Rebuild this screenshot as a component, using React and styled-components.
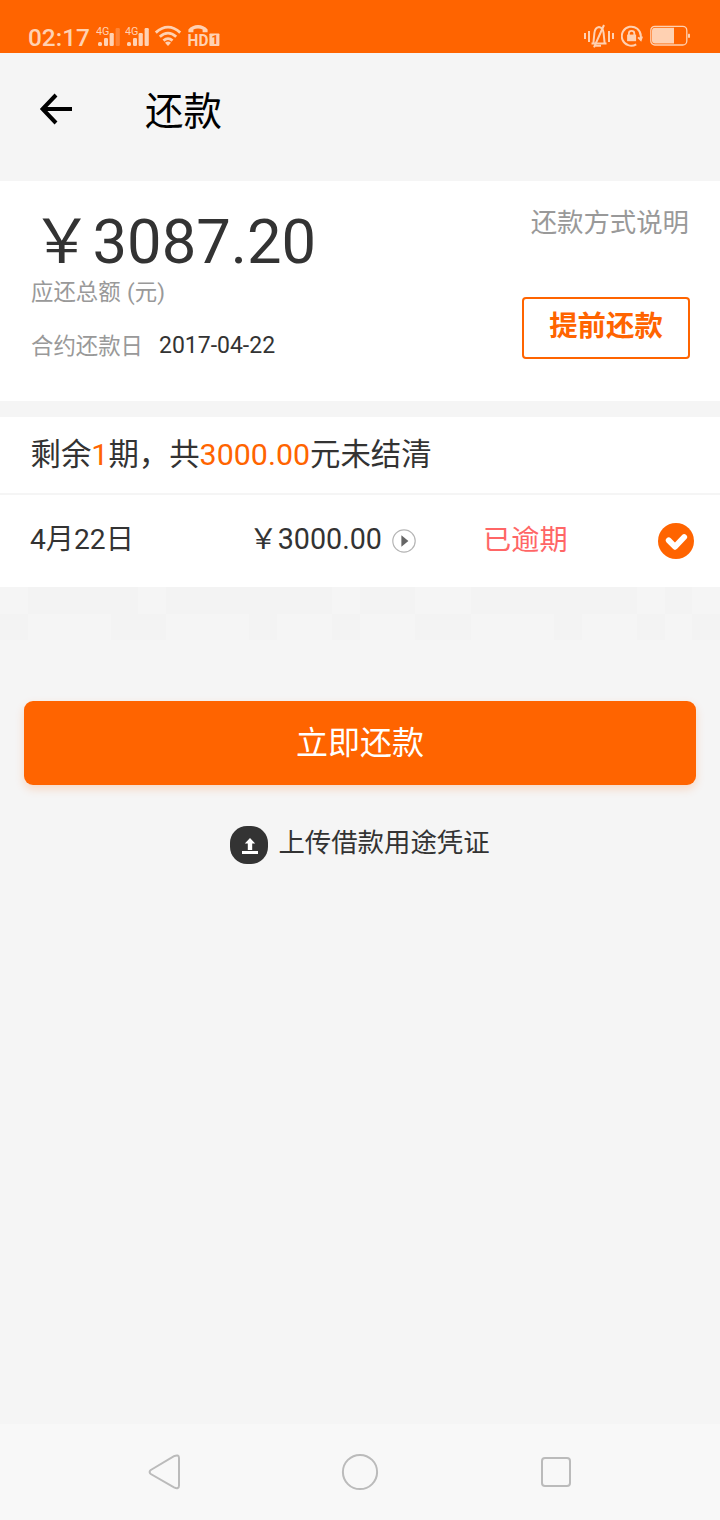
import styled, { createGlobalStyle } from "styled-components";

const ORANGE = "#ff6400";
const TINT = "#ffd1b2";
const PAGE = "#f5f5f5";

const GlobalStyle = createGlobalStyle`
  * {
    box-sizing: border-box;
  }

  body {
    margin: 0;
    background: ${PAGE};
    color: #333;
    font-family: Roboto, "Noto Sans CJK SC", sans-serif;
    white-space: nowrap;
  }

  svg {
    display: block;
    flex: none;
  }

  button {
    font-family: inherit;
    cursor: pointer;
  }
`;

const Screen = styled.div`
  width: 720px;
  height: 1520px;
  display: flex;
  flex-direction: column;
`;

const StatusBar = styled.div`
  height: 53px;
  padding: 20px 29px 0 28px;
  display: flex;
  justify-content: space-between;
  background: ${ORANGE};
  color: ${TINT};
`;

const StatusGroup = styled.div`
  display: flex;
  align-items: center;
  height: 32px;
  gap: ${(props) => props.$gap}px;
`;

const Clock = styled.span`
  width: 63px;
  font-size: 24.4px;
  font-weight: 500;
  line-height: 33px;
  padding-top: 3px;
`;

const Header = styled.header`
  height: 128px;
  padding: 0 38px 16px;
  display: flex;
  align-items: center;
`;

const Title = styled.h1`
  margin: 6px 0 0 71px;
  font-size: 38.4px;
  font-weight: 400;
  line-height: 48px;
  color: #000;
`;

const Summary = styled.section`
  height: 220px;
  padding: 25px 31px 0 31px;
  display: flex;
  justify-content: space-between;
  background: #fff;
`;

const SummaryRight = styled.div`
  display: flex;
  flex-direction: column;
  align-items: flex-end;
`;

const Total = styled.div`
  font-size: 61.5px;
  line-height: 72px;
`;

const Label = styled.div`
  font-size: 22.4px;
  line-height: 28px;
  color: #999;
  word-spacing: 1px;
`;

const DueDate = styled.div`
  margin-top: 25px;
  display: flex;
  align-items: center;
  gap: 16px;
  font-size: 23px;
  line-height: 30px;
`;

const HelpLink = styled.a`
  font-size: 26.4px;
  line-height: 34px;
  color: #999;
`;

const EarlyButton = styled.button`
  width: 168px;
  height: 62px;
  margin: 57px -1px 0 0;
  padding: 0 0 9px;
  border: 2px solid ${ORANGE};
  border-radius: 4px;
  background: #fff;
  color: ${ORANGE};
  font-size: 28.4px;
  font-weight: 700;
`;

const Plan = styled.section`
  margin-top: 16px;
  background: #fff;
`;

const PlanTitle = styled.div`
  height: 78px;
  padding: 0 30.5px;
  border-bottom: 2px solid ${PAGE};
  font-size: 30.4px;
  line-height: 76px;

  em {
    color: ${ORANGE};
    font-style: normal;
  }
`;

const PlanRow = styled.div`
  height: 92px;
  padding: 0 26px 0 30px;
  display: grid;
  grid-template-columns: 219px 234px 1fr 36px;
  align-items: center;
  font-size: 28.2px;
`;

const Cell = styled.span`
  display: flex;
  align-items: center;
  gap: 10px;
  line-height: 36px;
  color: ${(props) => (props.$overdue ? "#ff6666" : "inherit")};
`;

const CellText = styled.span`
  padding-bottom: ${(props) => props.$lift ?? 3}px;
  font-size: ${(props) => props.$size ?? 28.2}px;
`;

const Mosaic = styled.div`
  height: 53px;
  display: grid;
  grid-template-columns: repeat(26, 1fr);
  grid-template-rows: 27px 26px;
`;

const Tile = styled.i`
  background: ${(props) => (props.$dark ? "#f3f3f3" : PAGE)};
`;

const PayButton = styled.button`
  height: 84px;
  margin: 61px 24px 0;
  padding: 0 0 7px;
  border: 0;
  border-radius: 9px;
  background: ${ORANGE};
  box-shadow: 0 4px 10px rgba(255, 100, 0, 0.2);
  color: #fff;
  font-size: 32px;
`;

const Upload = styled.a`
  margin-top: 41px;
  height: 38px;
  display: flex;
  justify-content: center;
  align-items: center;
  gap: 10px;
  font-size: 26.4px;

  span {
    line-height: 34px;
    padding-bottom: 4px;
  }
`;

const NavBar = styled.nav`
  height: 96px;
  margin-top: auto;
  padding: 0 146px;
  display: flex;
  justify-content: space-between;
  align-items: center;
  background: #f8f8f8;
`;

const Signal = ({ weak }) => (
  <svg width="24" height="24" viewBox="0 0 24 24" fill={TINT}>
    <text x="0" y="10.5" fontSize="10.8">
      4G
    </text>
    <rect x="2" y="18" width="4" height="4" rx="1.5" />
    <rect x="8" y="14" width="4" height="8" rx="1.2" />
    <rect x="13.6" y="9" width="4.2" height="13" rx="1.2" />
    <rect x="19.6" y="4" width="4.2" height="18" rx="1.2" opacity={weak ? 0.3 : 1} />
  </svg>
);

const Wifi = () => (
  <svg width="28" height="24" viewBox="0 0 28 24" fill="none" stroke={TINT} strokeWidth="2.8">
    <path d="M1.8 8.6Q14 -2.3 26.2 8.6" />
    <path d="M5.8 12.8Q14 5.4 22.2 12.8" />
    <path d="M9.5 16.6Q14 12.6 18.5 16.6" />
    <path d="M11 18.8Q14 16.2 17 18.8L14 22Z" fill={TINT} stroke="none" />
  </svg>
);

const HdCall = () => (
  <svg width="33" height="32" viewBox="0 -4 33 32" fill={TINT}>
    <path d="M1.4 8.2V5.6C6 -0.4 16 -0.4 20.6 5.6V8.2H15.6V5.6Q11 3.6 6.4 5.6V8.2Z" />
    <text x="0.6" y="22" fontSize="17.4" fontWeight="700" textLength="20.8" lengthAdjust="spacingAndGlyphs">
      HD
    </text>
    <rect x="22.4" y="9.4" width="10" height="12.6" rx="0.8" />
    <text x="24.4" y="20" fontSize="12" fontWeight="700" fill={ORANGE}>
      1
    </text>
  </svg>
);

const Muted = () => (
  <svg width="30" height="24" viewBox="0 0 30 24" fill="none" stroke={TINT} strokeWidth="2">
    <path d="M1 9V15M5 7V18M25 7V18M29 9V15" />
    <path d="M7.5 19.4H22.5M9.4 19L10.4 9Q11 3.5 15 3Q19 3.5 19.6 9L20.6 19" />
    <path d="M20 1L10 23.4M11.5 21.8H17" />
  </svg>
);

const RotationLock = () => (
  <svg width="22" height="22" viewBox="0.8 0 22 22" fill="none" stroke={TINT} strokeWidth="2">
    <path d="M16 19.3A9.5 9.5 0 1 1 20.6 11V13.5M17.9 12.4L20.6 15L21.8 11.5" />
    <rect x="6.9" y="9.6" width="9" height="6.6" fill={TINT} stroke="none" />
    <path d="M8.7 10V8.2Q8.7 5.8 11.4 5.8T14.1 8.2V10" strokeWidth="1.8" />
  </svg>
);

const Battery = () => (
  <svg width="41" height="22" viewBox="0 0 41 22" fill={TINT}>
    <rect x="0.8" y="1.4" width="36" height="18.6" rx="4" fill="none" stroke={TINT} strokeWidth="1.3" />
    <path d="M5 2.8H24V18.6H5Q2 18.6 2 15.6V5.8Q2 2.8 5 2.8Z" />
    <rect x="38" y="8.8" width="2" height="4" rx="0.5" />
  </svg>
);

const BackArrow = () => (
  <svg width="36" height="34" viewBox="0 0 36 34" fill="none" stroke="#000" strokeWidth="4">
    <path d="M34 17H5M18 3L4.6 17L18 31" />
  </svg>
);

const Detail = () => (
  <svg width="24" height="24" viewBox="0 0 24 24">
    <circle cx="12" cy="12" r="11.2" fill="none" stroke="#b5b5b5" strokeWidth="1.2" />
    <path d="M9.4 6.2L16.4 12L9.4 17.8Z" fill="#666" />
  </svg>
);

const Checked = () => (
  <svg width="36" height="36" viewBox="0 0 36 36" fill="none">
    <circle cx="18" cy="18" r="18" fill={ORANGE} />
    <path
      d="M10.7 17.4L17 23.8L26.2 14"
      stroke="#fff"
      strokeWidth="5.8"
      strokeLinecap="round"
      strokeLinejoin="round"
    />
  </svg>
);

const UploadIcon = () => (
  <svg width="38" height="38" viewBox="0 0 38 38">
    <rect width="38" height="38" rx="17" fill="#333" />
    <path d="M20 12L25.2 17.5H22.2V24H17.8V17.5H14.8ZM12 25H28V28H12Z" fill="#fff" />
  </svg>
);

const tiles = ["01111011111101100111111010", "10001100010010011000100101"];

const App = () => (
  <Screen>
    <GlobalStyle />
    <StatusBar>
      <StatusGroup $gap={5}>
        <Clock>02:17</Clock>
        <Signal weak />
        <Signal />
        <Wifi />
        <HdCall />
      </StatusGroup>
      <StatusGroup $gap={7}>
        <Muted />
        <RotationLock />
        <Battery />
      </StatusGroup>
    </StatusBar>

    <Header>
      <BackArrow />
      <Title>还款</Title>
    </Header>

    <Summary>
      <div>
        <Total>￥3087.20</Total>
        <Label>应还总额 (元)</Label>
        <DueDate>
          <Label>合约还款日</Label>
          2017-04-22
        </DueDate>
      </div>
      <SummaryRight>
        <HelpLink>还款方式说明</HelpLink>
        <EarlyButton>提前还款</EarlyButton>
      </SummaryRight>
    </Summary>

    <Plan>
      <PlanTitle>
        剩余<em>1</em>期，共<em>3000.00</em>元未结清
      </PlanTitle>
      <PlanRow>
        <Cell>
          <CellText>4月22日</CellText>
        </Cell>
        <Cell>
          <CellText $size={28.7} $lift={4}>￥3000.00</CellText>
          <Detail />
        </Cell>
        <Cell $overdue>
          <CellText $lift={0}>已逾期</CellText>
        </Cell>
        <Checked />
      </PlanRow>
    </Plan>

    <Mosaic>
      {tiles.map((row, r) =>
        row.split("").map((t, i) => <Tile key={`${r}-${i}`} $dark={t === "1"} />)
      )}
    </Mosaic>

    <PayButton>立即还款</PayButton>
    <Upload>
      <UploadIcon />
      <span>上传借款用途凭证</span>
    </Upload>

    <NavBar>
      <svg width="36" height="38" viewBox="0 0 36 38" fill="none" stroke="#bbb" strokeWidth="2">
        <path d="M4.8 17L28 3.2Q33 1 33 5V32.4Q33 36.6 28 34.4L4.8 21Q2.4 19 4.8 17Z" />
      </svg>
      <svg width="38" height="38" viewBox="0 0 38 38" fill="none" stroke="#bbb" strokeWidth="2">
        <circle cx="19" cy="19" r="17.1" />
      </svg>
      <svg width="36" height="36" viewBox="0 0 36 36" fill="none" stroke="#bbb" strokeWidth="2">
        <rect x="4" y="4" width="28" height="28" rx="3" />
      </svg>
    </NavBar>
  </Screen>
);

export default App;
